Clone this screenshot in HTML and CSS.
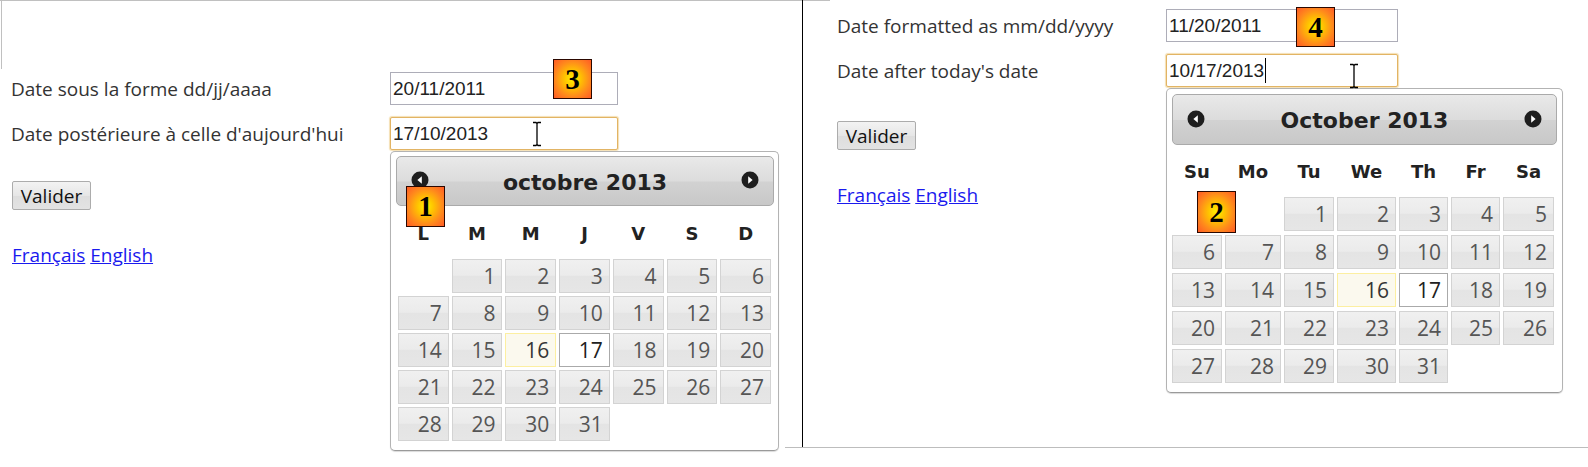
FILE: index.html
```html
<!DOCTYPE html>
<html lang="fr">
<head>
<meta charset="utf-8">
<title>Datepicker</title>
<link rel="stylesheet" href="styles.css">
</head>
<body>
<div class="page">
  <section class="panel-fr fr">
    <div class="frame-top"></div>
    <form class="form">
      <div class="rows">
        <div class="row">
          <label class="label">Date sous la forme dd/jj/aaaa</label>
          <div class="field">
            <input class="input" type="text" value="20/11/2011" readonly>
            <span class="badge badge-3">3</span>
          </div>
        </div>
        <div class="row">
          <label class="label">Date postérieure à celle d'aujourd'hui</label>
          <div class="field">
            <input class="input focus" type="text" value="17/10/2013" readonly>
            <svg class="ibeam" viewBox="0 0 10 26" width="10" height="26"><path d="M1 1.5h3l1 1 1-1h3M5 2.5v21M1 24.5h3l1-1 1 1h3" stroke="#000" stroke-width="1.3" fill="none"/></svg>
            <div class="dp">
              <div class="dp-header">
                <svg class="nav" viewBox="0 0 18 18" width="18" height="18"><circle cx="9" cy="9" r="8.5" fill="#1e1e1e"/><path d="M10.8 5.2 L6.4 9 L10.8 12.8 Z" fill="#fff"/></svg>
                <span class="dp-title">octobre 2013</span>
                <svg class="nav" viewBox="0 0 18 18" width="18" height="18"><circle cx="9" cy="9" r="8.5" fill="#1e1e1e"/><path d="M7.2 5.2 L11.6 9 L7.2 12.8 Z" fill="#fff"/></svg>
              </div>
              <div class="dp-grid">
                <span class="dow">L</span><span class="dow">M</span><span class="dow">M</span><span class="dow">J</span><span class="dow">V</span><span class="dow">S</span><span class="dow">D</span>
                <span class="day start-2">1</span><span class="day">2</span><span class="day">3</span><span class="day">4</span><span class="day">5</span><span class="day">6</span>
                <span class="day">7</span><span class="day">8</span><span class="day">9</span><span class="day">10</span><span class="day">11</span><span class="day">12</span><span class="day">13</span>
                <span class="day">14</span><span class="day">15</span><span class="day today">16</span><span class="day active">17</span><span class="day">18</span><span class="day">19</span><span class="day">20</span>
                <span class="day">21</span><span class="day">22</span><span class="day">23</span><span class="day">24</span><span class="day">25</span><span class="day">26</span><span class="day">27</span>
                <span class="day">28</span><span class="day">29</span><span class="day">30</span><span class="day">31</span>
              </div>
              <span class="badge badge-1">1</span>
            </div>
          </div>
        </div>
      </div>
      <button class="btn" type="button">Valider</button>
      <p class="langs"><a href="#">Français</a> <a href="#">English</a></p>
    </form>
  </section>

  <section class="panel-en en">
    <div class="en-inner">
      <form class="form">
        <div class="rows">
          <div class="row">
            <label class="label">Date formatted as mm/dd/yyyy</label>
            <div class="field">
              <input class="input" type="text" value="11/20/2011" readonly>
              <span class="badge badge-4">4</span>
            </div>
          </div>
          <div class="row">
            <label class="label">Date after today's date</label>
            <div class="field">
              <input class="input focus" type="text" value="10/17/2013" readonly>
              <span class="caret"></span>
              <svg class="ibeam" viewBox="0 0 10 26" width="10" height="26"><path d="M1 1.5h3l1 1 1-1h3M5 2.5v21M1 24.5h3l1-1 1 1h3" stroke="#000" stroke-width="1.3" fill="none"/></svg>
              <div class="dp">
                <div class="dp-header">
                  <svg class="nav" viewBox="0 0 18 18" width="18" height="18"><circle cx="9" cy="9" r="8.5" fill="#1e1e1e"/><path d="M10.8 5.2 L6.4 9 L10.8 12.8 Z" fill="#fff"/></svg>
                  <span class="dp-title">October 2013</span>
                  <svg class="nav" viewBox="0 0 18 18" width="18" height="18"><circle cx="9" cy="9" r="8.5" fill="#1e1e1e"/><path d="M7.2 5.2 L11.6 9 L7.2 12.8 Z" fill="#fff"/></svg>
                </div>
                <div class="dp-grid">
                  <span class="dow">Su</span><span class="dow">Mo</span><span class="dow">Tu</span><span class="dow">We</span><span class="dow">Th</span><span class="dow">Fr</span><span class="dow">Sa</span>
                  <span class="day start-3">1</span><span class="day">2</span><span class="day">3</span><span class="day">4</span><span class="day">5</span>
                  <span class="day">6</span><span class="day">7</span><span class="day">8</span><span class="day">9</span><span class="day">10</span><span class="day">11</span><span class="day">12</span>
                  <span class="day">13</span><span class="day">14</span><span class="day">15</span><span class="day today">16</span><span class="day active">17</span><span class="day">18</span><span class="day">19</span>
                  <span class="day">20</span><span class="day">21</span><span class="day">22</span><span class="day">23</span><span class="day">24</span><span class="day">25</span><span class="day">26</span>
                  <span class="day">27</span><span class="day">28</span><span class="day">29</span><span class="day">30</span><span class="day">31</span>
                </div>
                <span class="badge badge-2">2</span>
              </div>
            </div>
          </div>
        </div>
        <button class="btn" type="button">Valider</button>
        <p class="langs"><a href="#">Français</a> <a href="#">English</a></p>
      </form>
    </div>
  </section>
</div>
</body>
</html>
```

FILE: styles.css
```css
html, body {
  margin: 0;
  padding: 0;
  background: #fff;
}

body {
  font-family: "Open Sans", "Noto Sans", sans-serif;
}

.page {
  display: flex;
  width: 1588px;
  height: 467px;
  overflow: hidden;
}

/* ---------- left (French) panel ---------- */
.panel-fr {
  flex: none;
  width: 785px;
  box-sizing: border-box;
  border-top: 1px solid #c0c0c0;
}

.frame-top {
  height: 68px;
  margin-left: 1px;
  border-left: 1px solid #c0c0c0;
}

.fr .form {
  margin-top: 3px;
  padding-left: 11px;
}

/* ---------- right (English) panel ---------- */
.panel-en {
  flex: none;
  width: 803px;
  height: 448px;
  box-sizing: border-box;
  border-bottom: 1px solid #bdbdbd;
  background: linear-gradient(#c0c0c0, #c0c0c0) no-repeat 0 0 / 45px 1px;
}

.en-inner {
  margin-left: 17px;
  height: 447px;
  box-sizing: border-box;
  border-left: 1px solid #000;
  padding-left: 34px;
  padding-top: 9px;
}

/* ---------- form ---------- */
.rows {
  display: flex;
  flex-direction: column;
  gap: 12px;
}

.row {
  display: grid;
  align-items: center;
  height: 33px;
}

.fr .row { grid-template-columns: 379px 228px; }
.en .row { grid-template-columns: 329px 232px; }

.label {
  font-size: 19px;
  line-height: 26px;
  color: #333;
  white-space: nowrap;
}

.field {
  position: relative;
  height: 33px;
}

.input {
  display: block;
  box-sizing: border-box;
  width: 100%;
  height: 33px;
  margin: 0;
  padding: 0 2px;
  border: 1px solid #adadb8;
  border-radius: 0;
  background: #fff;
  color: #222;
  font: 19px "Liberation Sans", Arial, sans-serif;
  outline: none;
}

.input.focus {
  border-color: #e2b464;
  border-radius: 2px;
  box-shadow: 0 0 1px 1px #f4dfb3;
}

.caret {
  position: absolute;
  left: 99px;
  top: 4px;
  width: 1px;
  height: 25px;
  background: #000;
}

.ibeam {
  position: absolute;
  left: 142px;
  top: 4px;
  z-index: 3;
}

.en .ibeam {
  left: 183px;
  top: 9px;
}

.btn {
  display: block;
  box-sizing: border-box;
  width: 79px;
  height: 29px;
  padding: 0;
  border: 1px solid #acacac;
  border-radius: 2px;
  background: linear-gradient(#f3f3f3, #e6e6e6 50%, #dddddd 51%, #e3e3e3);
  color: #111;
  font-family: "Open Sans", "Noto Sans", sans-serif;
  font-size: 19px;
  line-height: 26px;
}

.fr .btn { margin-top: 31px; margin-left: 1px; }
.en .btn { margin-top: 34px; }

.langs {
  margin: 32px 0 0;
  font-size: 19px;
  line-height: 26px;
}

.fr .langs { margin-left: 1px; }

.langs a {
  color: #1a1aee;
}

/* ---------- datepicker ---------- */
.dp {
  position: absolute;
  left: 0;
  top: 34px;
  z-index: 2;
  box-sizing: border-box;
  background: #fff;
  border: 1px solid #b3b3b3;
  border-bottom-color: #9a9a9a;
  border-radius: 5px;
  box-shadow: 0 1px 1px rgba(0, 0, 0, 0.15);
}

.fr .dp {
  width: 389px;
  padding: 4px 4px 9px 5px;
}

.en .dp {
  width: 397px;
  padding: 5px 5px 9px 5px;
}

.dp-header {
  display: flex;
  align-items: center;
  box-sizing: border-box;
  padding: 0 14px;
  border: 1px solid #aaa;
  border-radius: 5px;
  background: linear-gradient(#e9e9e9, #dcdcdc 50%, #d2d2d2 52%, #c8c8c8);
}

.fr .dp-header { height: 50px; }
.en .dp-header { height: 51px; }

.nav {
  flex: none;
  margin-top: -2px;
}

.dp-title {
  flex: 1;
  text-align: center;
  font: bold 22px "DejaVu Sans", Verdana, sans-serif;
  color: #222;
  padding-top: 2px;
}

.dp-grid {
  display: grid;
  column-gap: 3px;
}

.fr .dp-grid {
  width: 373px;
  margin-left: 2px;
  grid-template-columns: repeat(7, 1fr);
  grid-template-rows: 50px repeat(5, 34px);
  row-gap: 3px;
}

.en .dp-grid {
  grid-template-columns: 50px 56px 50px 59px 49px 49px 51px;
  grid-template-rows: 48px repeat(5, 34px);
  row-gap: 4px;
}

.dow {
  display: flex;
  align-items: center;
  justify-content: center;
  padding-top: 5px;
  font: bold 18px "DejaVu Sans", Verdana, sans-serif;
  color: #222;
}

.day {
  box-sizing: border-box;
  border: 1px solid #d3d3d3;
  background: linear-gradient(#f0f0f0, #ebebeb 48%, #e4e4e4 50%, #e6e6e6);
  color: #555;
  font-size: 21px;
  line-height: 32px;
  text-align: right;
  padding-right: 6px;
}

.day.today {
  border-color: #fcefa1;
  background: #fbf9ee;
  color: #363636;
}

.day.active {
  border-color: #aaa;
  background: #fff;
  color: #212121;
}

.start-2 { grid-column-start: 2; }
.start-3 { grid-column-start: 3; }

/* ---------- numbered badges ---------- */
.badge {
  position: absolute;
  z-index: 4;
  display: flex;
  align-items: center;
  justify-content: center;
  box-sizing: border-box;
  width: 39px;
  height: 40px;
  border: 1px solid #2b0800;
  background: radial-gradient(ellipse at 50% 50%, #fff200 0%, #ffc400 30%, #ff8a1c 65%, #ff5a26 100%);
  color: #000;
  font: bold 29px "Liberation Serif", "Times New Roman", serif;
}

.badge-3 { left: 163px; top: -13px; }
.badge-1 { left: 15px; top: 34px; height: 41px; }
.badge-4 { left: 130px; top: -2px; }
.badge-2 { left: 30px; top: 102px; height: 42px; }
```
